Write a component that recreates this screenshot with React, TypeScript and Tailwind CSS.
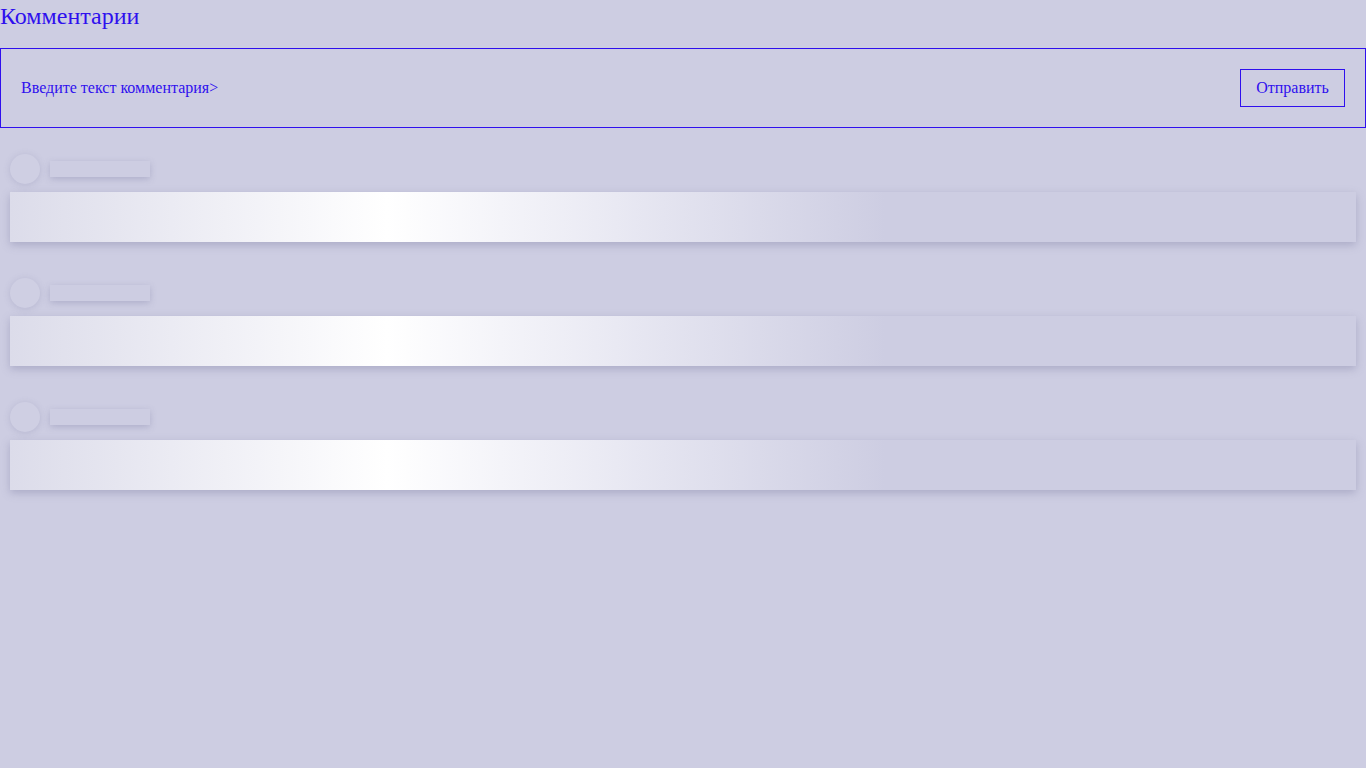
export default function App() {
  const skeletons = [1, 2, 3];

  return (
    <div className="min-h-[768px] bg-[#cdcde2] font-['Liberation_Serif',serif] text-[#2f10ee]">
      {/* Heading */}
      <h2 className="text-[24px] leading-8 mb-4">Комментарии</h2>

      {/* Form */}
      <form className="h-20 border border-[#2f10ee] px-5 flex items-center justify-between">
        <div className="text-base">Введите текст комментария&gt;</div>
        <button
          type="button"
          className="h-[38px] w-[105px] border border-[#2f10ee] text-base text-center"
        >
          Отправить
        </button>
      </form>

      {/* Skeletons */}
      <div className="pt-[26px] px-[10px]">
        {skeletons.map((item) => (
          <div key={item} className="mb-9">
            <div className="flex items-center gap-[10px] mb-2">
              <div className="w-[30px] h-[30px] rounded-full bg-[#cfcfe3] shadow-[0_1px_6px_rgba(120,120,160,0.25)]" />
              <div className="w-[100px] h-4 bg-[#cdcde2] shadow-[0_2px_6px_rgba(120,120,160,0.35)]" />
            </div>
            <div className="h-[50px] bg-[linear-gradient(90deg,#dcdcea_0%,#ffffff_28%,#e9e9f3_45%,#cdcde2_65%,#cdcde2_100%)] shadow-[0_3px_8px_rgba(110,110,150,0.35)]" />
          </div>
        ))}
      </div>
    </div>
  );
}
